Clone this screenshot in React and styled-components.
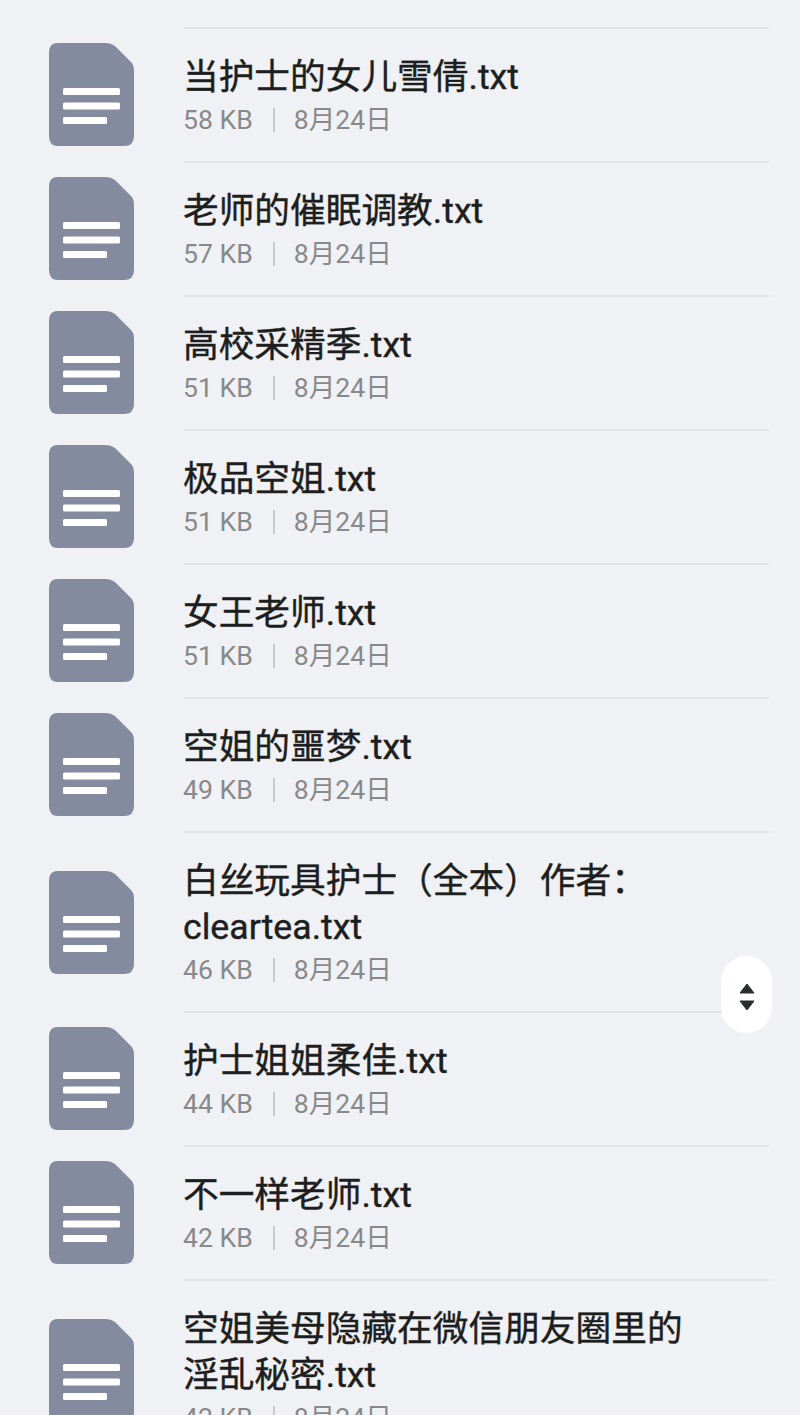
import React from 'react'
import styled, { createGlobalStyle } from 'styled-components'

const GlobalStyle = createGlobalStyle`
  html, body {
    margin: 0;
    padding: 0;
    height: 1415px;
    overflow: hidden;
    background: #f0f1f4;
  }
`
const Page = styled.div`
  position: relative;
  width: 800px;
  height: 1415px;
  overflow: hidden;
  padding-top: 27px;
  box-sizing: border-box;
  background: #f0f1f4;
  font-family: Roboto, "Noto Sans CJK SC", sans-serif;
`
const Row = styled.div`
  display: flex;
  align-items: center;
  height: ${props => (props.$tall ? 180 : 134)}px;
  padding-left: 49px;
  flex-shrink: 0;
`
const IconBox = styled.div`
  width: 85px;
  height: 103px;
  flex-shrink: 0;
  margin-right: 50px;
  margin-top: ${props => (props.$tall ? 3 : 1)}px;
  svg {
    display: block;
  }
`
const Body = styled.div`
  align-self: stretch;
  width: 585px;
  padding-top: 1px;
  border-top: 2px solid #e3e4e7;
  box-sizing: border-box;
  display: flex;
  flex-direction: column;
  justify-content: center;
`
const Title = styled.div`
  font-size: 35.7px;
  line-height: 46px;
  font-weight: 400;
  color: #1d1e20;
  margin-left: -1px;
  -webkit-text-stroke: 0.4px #1d1e20;
`
const Meta = styled.div`
  display: flex;
  align-items: center;
  margin-top: 2px;
  font-size: 26.6px;
  line-height: 36px;
  color: #87898c;
  margin-left: -1px;
`
const Sep = styled.span`
  width: 2px;
  height: 24px;
  background: #c9cacd;
  margin: 0 19px 0 20px;
`
const Handle = styled.div`
  position: absolute;
  left: 721px;
  top: 956px;
  width: 51px;
  height: 77px;
  border-radius: 26px;
  background: #ffffff;
  display: flex;
  align-items: center;
  justify-content: center;
  padding-top: 5px;
  box-sizing: border-box;
`

const FileIcon = () => (
  <svg width="85" height="103" viewBox="0 0 85 103">
    <path
      d="M9 0H57Q62 0 66 3L82 19Q85 22 85 28V93Q85 103 75 103H9Q0 103 0 93V9Q0 0 9 0Z"
      fill="#858b9f"
    />
    <rect x="14" y="45" width="57" height="7" rx="1.5" fill="#fff" />
    <rect x="14" y="59.5" width="57" height="7" rx="1.5" fill="#fff" />
    <rect x="14" y="74" width="44" height="7" rx="1.5" fill="#fff" />
  </svg>
)

const SortIcon = () => (
  <svg width="16" height="28" viewBox="0 0 16 28">
    <path d="M8 1L15 10H1Z" fill="#2c2d30" stroke="#2c2d30" strokeLinejoin="round" />
    <path d="M8 27L15 18H1Z" fill="#2c2d30" stroke="#2c2d30" strokeLinejoin="round" />
  </svg>
)

const files = [
  { name: '当护士的女儿雪倩.txt', size: '58 KB' },
  { name: '老师的催眠调教.txt', size: '57 KB' },
  { name: '高校采精季.txt', size: '51 KB' },
  { name: '极品空姐.txt', size: '51 KB' },
  { name: '女王老师.txt', size: '51 KB' },
  { name: '空姐的噩梦.txt', size: '49 KB' },
  { name: '白丝玩具护士（全本）作者：\ncleartea.txt', size: '46 KB', tall: true },
  { name: '护士姐姐柔佳.txt', size: '44 KB' },
  { name: '不一样老师.txt', size: '42 KB' },
  { name: '空姐美母隐藏在微信朋友圈里的\n淫乱秘密.txt', size: '42 KB', tall: true },
]

const App = () => {
  return (
    <Page>
      <GlobalStyle />
      {files.map(file => (
        <Row key={file.name} $tall={file.tall}>
          <IconBox $tall={file.tall}>
            <FileIcon />
          </IconBox>
          <Body>
            {file.name.split('\n').map(line => (
              <Title key={line}>{line}</Title>
            ))}
            <Meta>
              {file.size}
              <Sep />
              8月24日
            </Meta>
          </Body>
        </Row>
      ))}
      <Handle>
        <SortIcon />
      </Handle>
    </Page>
  )
}

export default App
